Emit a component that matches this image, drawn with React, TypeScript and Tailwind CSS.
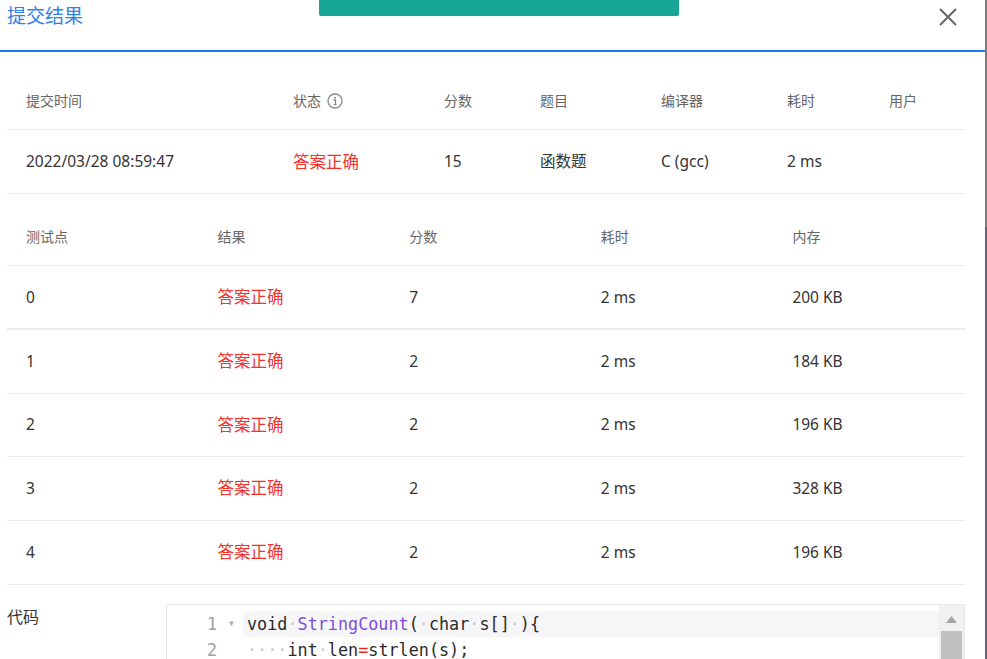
import React from "react";

const RED = "text-[#f5312b]";

function InfoIcon() {
  return (
    <svg width="16" height="16" viewBox="0 0 16 16" className="ml-[6px]">
      <circle cx="8" cy="8" r="7" fill="none" stroke="#8a8a8a" strokeWidth="1.3" />
      <circle cx="8" cy="4.8" r="0.95" fill="#8a8a8a" />
      <path d="M6.6 7h1.9v4.6M6.6 11.6h3" fill="none" stroke="#8a8a8a" strokeWidth="1.3" />
    </svg>
  );
}

const Dot = () => <span className="text-[#c8c8c8]">·</span>;

export default function App() {
  const t1Head = ["提交时间", "状态", "分数", "题目", "编译器", "耗时", "用户"];
  const t1Row = ["2022/03/28 08:59:47", "答案正确", "15", "函数题", "C (gcc)", "2 ms", ""];
  const tests = [
    ["0", "7", "2 ms", "200 KB"],
    ["1", "2", "2 ms", "184 KB"],
    ["2", "2", "2 ms", "196 KB"],
    ["3", "2", "2 ms", "328 KB"],
    ["4", "2", "2 ms", "196 KB"],
  ];
  const rowCls = [
    "h-[64px] border-b-2 border-[#ececec] pt-[1px]",
    "h-[64px] border-b border-[#ececec]",
    "h-[63px] border-b border-[#ececec]",
    "h-[64px] border-b border-[#ececec]",
    "h-[64px] border-b border-[#ececec]",
  ];
  const grid1 = "grid grid-cols-[267px_151px_96px_121px_126px_102px_95px]";
  const grid2 = "grid grid-cols-5";

  return (
    <div
      className="relative flex h-[659px] w-[987px] overflow-hidden bg-white"
      style={{ fontFamily: '"Noto Sans", "Noto Sans CJK SC", sans-serif' }}
    >
      <div className="flex h-full w-[985px] flex-col bg-white">
        {/* header */}
        <div className="flex h-[52px] shrink-0 items-start justify-between border-b-2 border-[#1b7de6] pl-[7px] pr-[28px]">
          <div className="mt-[3px] text-[19px] leading-[26px] text-[#2f80e8]">提交结果</div>
          <svg width="18" height="18" viewBox="0 0 18 18" className="mt-[8px]">
            <path d="M1 1L17 17M17 1L1 17" stroke="#666" strokeWidth="2" />
          </svg>
        </div>

        <div className="w-[958px] pl-[7px] box-content">
          {/* table 1 */}
          <div className="mt-[20px]">
            <div className={`${grid1} h-[58px] items-center border-b border-[#ececec] text-[14px] text-[#666]`}>
              {t1Head.map((h, i) => (
                <div key={i} className="flex items-center pl-[19px]">
                  {h}
                  {i === 1 && <InfoIcon />}
                </div>
              ))}
            </div>
            <div className={`${grid1} h-[64px] items-center border-b border-[#ececec] pt-[1px] text-[15.5px] text-[#333]`}>
              {t1Row.map((c, i) => (
                <div key={i} className={`pl-[19px] ${i === 1 ? `${RED} text-[16.5px]` : ""}`}>
                  {c}
                </div>
              ))}
            </div>
          </div>

          {/* table 2 */}
          <div className="mt-[14px]">
            <div className={`${grid2} h-[58px] items-center border-b border-[#ececec] text-[14px] text-[#666]`}>
              {["测试点", "结果", "分数", "耗时", "内存"].map((h) => (
                <div key={h} className="pl-[19px]">
                  {h}
                </div>
              ))}
            </div>
            {tests.map((r, i) => (
              <div key={i} className={`${grid2} ${rowCls[i]} items-center text-[15.5px] text-[#333]`}>
                <div className="pl-[19px]">{r[0]}</div>
                <div className={`pl-[19px] text-[16.5px] ${RED}`}>答案正确</div>
                <div className="pl-[19px]">{r[1]}</div>
                <div className="pl-[19px]">{r[2]}</div>
                <div className="pl-[19px]">{r[3]}</div>
              </div>
            ))}
          </div>
        </div>

        {/* code */}
        <div className="mt-[19px] flex pl-[7px]">
          <div className="w-[159px] pt-[2px] text-[16px] leading-[22px] text-[#333]">代码</div>
          <div className="flex h-[60px] w-[799px] border-l border-t border-r border-[#e8e8e8]">
            <div
              className="w-[76px] pt-[6px] text-right text-[16.8px] leading-[26px] text-[#9aa0a6]"
              style={{ fontFamily: '"DejaVu Sans Mono", monospace' }}
            >
              <div className="flex h-[26px] items-center justify-end">
                <span className="pr-[12px]">1</span>
                <span className="w-[14px] text-left text-[8px] text-[#b0b0b0]">▼</span>
              </div>
              <div className="flex h-[26px] items-center justify-end">
                <span className="pr-[26px]">2</span>
              </div>
            </div>
            <div
              className="flex-1 pt-[6px] text-[16.8px] leading-[26px] text-[#2b2b2b]"
              style={{ fontFamily: '"DejaVu Sans Mono", monospace' }}
            >
              <div className="h-[26px] whitespace-pre bg-[#f6f6f9] pl-[4px]">
                void<Dot />
                <span className="text-[#7e4fd4]">StringCount</span>(<Dot />char<Dot />s[]<Dot />){"{"}
              </div>
              <div className="h-[26px] whitespace-pre pl-[4px]">
                <Dot />
                <Dot />
                <Dot />
                <Dot />int<Dot />len<span className="text-[#e0282f]">=</span>strlen(s);
              </div>
            </div>
            <div className="flex w-[25px] flex-col items-center bg-[#f1f1f1]">
              <svg width="11" height="7" viewBox="0 0 11 7" className="mt-[11px]">
                <path d="M0 7L5.5 0L11 7Z" fill="#a3a3a3" />
              </svg>
              <div className="mt-[8px] w-[21px] flex-1 bg-[#c1c1c1]" />
            </div>
          </div>
        </div>
      </div>

      {/* right edge strip */}
      <div className="flex h-full w-[2px] flex-col">
        <div className="h-[227px] bg-[#7c7c7c]" />
        <div className="flex-1 bg-[#61617c]" />
      </div>

      {/* toast */}
      <div className="absolute left-[319px] top-0 h-[16px] w-[360px] rounded-b-[2px] bg-[#17a697]" />
    </div>
  );
}
